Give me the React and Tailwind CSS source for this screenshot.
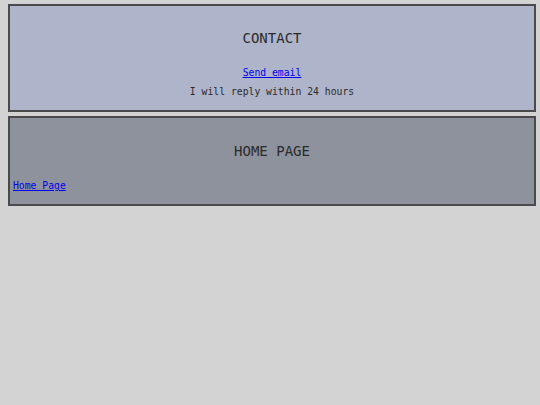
import React from 'react';

const mono = "font-['DejaVu_Sans_Mono',monospace]";

const Section = ({ bg, children }) => (
    <section className={`border-2 border-[#4a4a4a] ${bg} px-[3px]`}>
        {children}
    </section>
);

const App = () => {
    return (
        <div className={`min-h-[405px] bg-[#d3d3d3] pl-2 pr-1 pt-1 ${mono} text-[#2b2b2b]`}>
            <Section bg="bg-[#aeb4ca]">
                <h2 className="pt-6 text-center text-[14px] leading-4">CONTACT</h2>
                <div className="mt-[21px] pb-3 text-center text-[9.75px] leading-3">
                    <a href="#" className="text-[#0000ee] underline">Send email</a>
                    <p className="mt-[7px]">I will reply within 24 hours</p>
                </div>
            </Section>

            <div className="mt-1">
                <Section bg="bg-[#8e929c]">
                    <h2 className="pt-[25px] text-center text-[14px] leading-4">HOME PAGE</h2>
                    <div className="mt-[21px] pb-3 text-[9.75px] leading-3">
                        <a href="#" className="text-[#0000ee] underline">Home Page</a>
                    </div>
                </Section>
            </div>
        </div>
    );
};

export default App;
